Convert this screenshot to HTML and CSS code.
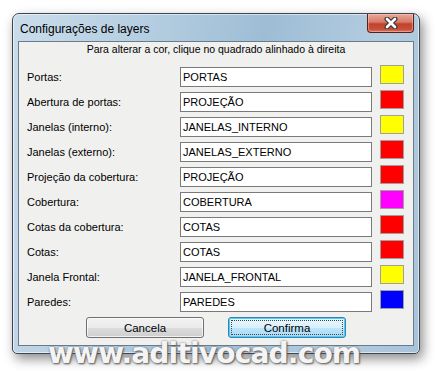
FILE: index.html
```html
<!DOCTYPE html>
<html lang="pt">
<head>
    <meta charset="UTF-8">
    <title>Configurações de layers</title>
    <link rel="stylesheet" href="styles.css">
</head>
<body>
    <div class="window">
        <div class="titlebar">
            <span class="title">Configurações de layers</span>
            <div class="close-btn">
                <svg width="14" height="12" viewBox="0 0 14 12">
                    <path d="M3 2 L11 10 M11 2 L3 10" stroke="#3a3a3a" stroke-width="5" stroke-linecap="round"/>
                    <path d="M3 2 L11 10 M11 2 L3 10" stroke="#fff" stroke-width="2.6" stroke-linecap="round"/>
                </svg>
            </div>
        </div>
        <div class="client">
            <p class="hint">Para alterar a cor, clique no quadrado alinhado à direita</p>
            <div class="rows">
                <div class="row"><label>Portas:</label><div class="field">PORTAS</div><div class="swatch yellow"></div></div>
                <div class="row"><label>Abertura de portas:</label><div class="field">PROJEÇÃO</div><div class="swatch red"></div></div>
                <div class="row"><label>Janelas (interno):</label><div class="field">JANELAS_INTERNO</div><div class="swatch yellow"></div></div>
                <div class="row"><label>Janelas (externo):</label><div class="field">JANELAS_EXTERNO</div><div class="swatch red"></div></div>
                <div class="row"><label>Projeção da cobertura:</label><div class="field">PROJEÇÃO</div><div class="swatch red"></div></div>
                <div class="row"><label>Cobertura:</label><div class="field">COBERTURA</div><div class="swatch magenta"></div></div>
                <div class="row"><label>Cotas da cobertura:</label><div class="field">COTAS</div><div class="swatch red"></div></div>
                <div class="row"><label>Cotas:</label><div class="field">COTAS</div><div class="swatch red"></div></div>
                <div class="row"><label>Janela Frontal:</label><div class="field">JANELA_FRONTAL</div><div class="swatch yellow"></div></div>
                <div class="row"><label>Paredes:</label><div class="field">PAREDES</div><div class="swatch blue"></div></div>
            </div>
            <div class="buttons">
                <button class="btn">Cancela</button>
                <button class="btn default"><span>Confirma</span></button>
            </div>
        </div>
    </div>
    <div class="watermark">www.aditivocad.com</div>
</body>
</html>
```
FILE: styles.css
```css
body {
    margin: 0;
    width: 435px;
    height: 372px;
    background: #fff;
    font-family: "Liberation Sans", Arial, sans-serif;
    font-size: 11px;
    color: #000;
    position: relative;
    overflow: hidden;
}

.window {
    box-sizing: border-box;
    width: 408px;
    height: 341px;
    margin: 13px 0 0 12px;
    border: 1px solid #3d4652;
    border-radius: 7px 7px 5px 5px;
    background: linear-gradient(100deg, #c9dceb 0%, #b4cde0 30%, #9ebdd5 55%, #b3cce0 80%, #a8c4da 100%);
    box-shadow: 3px 5px 12px rgba(0, 0, 0, 0.45), inset 0 0 0 1px rgba(255, 255, 255, 0.55);
    display: flex;
    flex-direction: column;
    padding: 0 5px 7px 5px;
}

.titlebar {
    height: 27px;
    display: flex;
    justify-content: space-between;
    align-items: flex-start;
}

.title {
    font-size: 12px;
    margin: 8px 0 0 2px;
    color: #000;
}

.close-btn {
    width: 47px;
    height: 19px;
    box-sizing: border-box;
    border: 1px solid #5a1f17;
    border-top: none;
    border-radius: 0 0 4px 4px;
    background: linear-gradient(#e8a999 0%, #d67a68 45%, #c2412d 55%, #c8503b 85%, #d77a62 100%);
    box-shadow: inset 0 0 0 1px rgba(255, 210, 200, 0.45);
    display: flex;
    justify-content: center;
    align-items: center;
}

.client {
    flex: 1;
    border: 1px solid #6b7b8a;
    background: #f0f0ee;
    display: flex;
    flex-direction: column;
}

.hint {
    margin: 0;
    height: 14px;
    line-height: 14px;
    text-align: center;
    font-size: 10.5px;
}

.rows {
    margin-top: 11px;
    display: flex;
    flex-direction: column;
    gap: 5px;
    padding: 0 9px 0 8px;
}

.row {
    display: flex;
    align-items: center;
    height: 20px;
}

.row label {
    width: 153px;
}

.field {
    box-sizing: border-box;
    width: 192px;
    height: 20px;
    line-height: 18px;
    border: 1px solid #7a7a7a;
    background: #fff;
    padding-left: 2px;
    font-size: 11px;
}

.swatch {
    box-sizing: border-box;
    width: 24px;
    height: 19px;
    margin-left: 8px;
    margin-top: -5px;
    border: 1px solid #a0a0a0;
}

.yellow { background: #ffff00; }
.red { background: #ff0000; }
.magenta { background: #ff00ff; }
.blue { background: #0000ff; }

.buttons {
    margin-top: 5px;
    display: flex;
    justify-content: center;
    gap: 24px;
}

.btn {
    box-sizing: border-box;
    width: 118px;
    height: 21px;
    border: 1px solid #707070;
    border-radius: 3px;
    background: linear-gradient(#f2f2f2 0%, #ebebeb 50%, #dddddd 51%, #cfcfcf 100%);
    box-shadow: inset 0 0 0 1px rgba(255, 255, 255, 0.7);
    font-family: "Liberation Sans", Arial, sans-serif;
    font-size: 11.5px;
    color: #000;
    padding: 0;
}

.btn.default {
    border-color: #3c7fb1;
    box-shadow: inset 0 0 0 1px #48d0f8;
    background: linear-gradient(#eaf6fd 0%, #d9f0fc 50%, #bee6fd 51%, #a7d9f5 100%);
    padding: 2px;
}

.btn.default span {
    display: block;
    height: 100%;
    line-height: 15px;
    border: 1px dotted #444;
    box-sizing: border-box;
}

.watermark {
    position: absolute;
    left: 48px;
    top: 337px;
    font-family: "DejaVu Sans", Verdana, sans-serif;
    font-weight: bold;
    font-size: 28px;
    letter-spacing: -0.8px;
    color: #f4f4f4;
    text-shadow: 0 0 2px #777, 1px 1px 2px #555;
}
```
